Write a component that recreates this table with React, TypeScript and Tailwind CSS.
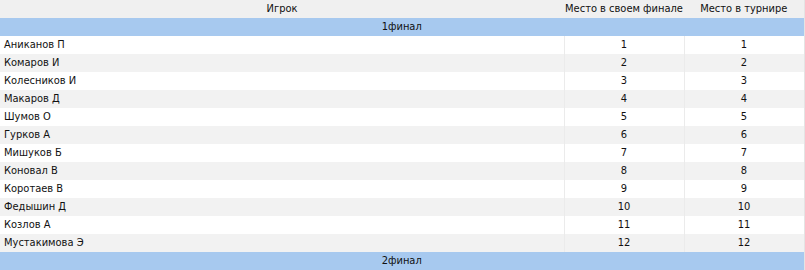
const rows = [
  'Аниканов П',
  'Комаров И',
  'Колесников И',
  'Макаров Д',
  'Шумов О',
  'Гурков А',
  'Мишуков Б',
  'Коновал В',
  'Коротаев В',
  'Федышин Д',
  'Козлов А',
  'Мустакимова Э',
]

export default function App() {
  return (
    <div className="w-[805px] h-[270px] overflow-hidden bg-white font-['DejaVu_Sans_Condensed','Liberation_Sans',sans-serif] text-[11px] text-[#111]">
      <table className="w-[804px] border-collapse table-fixed border-r border-[#e4e4e4]">
        <colgroup>
          <col className="w-[564px]" />
          <col className="w-[120px]" />
          <col className="w-[120px]" />
        </colgroup>
        <thead>
          <tr className="h-[18px] bg-[#f0f0f0]">
            <th className="font-normal text-center p-0 leading-[18px]">Игрок</th>
            <th className="font-normal text-center p-0 leading-[18px] whitespace-nowrap">Место в своем финале</th>
            <th className="font-normal text-center p-0 leading-[18px] whitespace-nowrap">Место в турнире</th>
          </tr>
        </thead>
        <tbody>
          <tr className="h-[18px] bg-[#a7c9ef]">
            <td colSpan={3} className="text-center p-0 leading-[18px]">1финал</td>
          </tr>
          {rows.map((name, i) => (
            <tr key={name} className={`h-[18px] ${i % 2 === 0 ? 'bg-white' : 'bg-[#f2f2f2]'}`}>
              <td className="p-0 pl-[4px] leading-[18px]">{name}</td>
              <td className="p-0 leading-[18px] text-center border-l border-[#ebebeb]">{i + 1}</td>
              <td className="p-0 leading-[18px] text-center border-l border-[#ebebeb]">{i + 1}</td>
            </tr>
          ))}
          <tr className="h-[18px] bg-[#a7c9ef]">
            <td colSpan={3} className="text-center p-0 leading-[18px]">2финал</td>
          </tr>
        </tbody>
      </table>
    </div>
  )
}
